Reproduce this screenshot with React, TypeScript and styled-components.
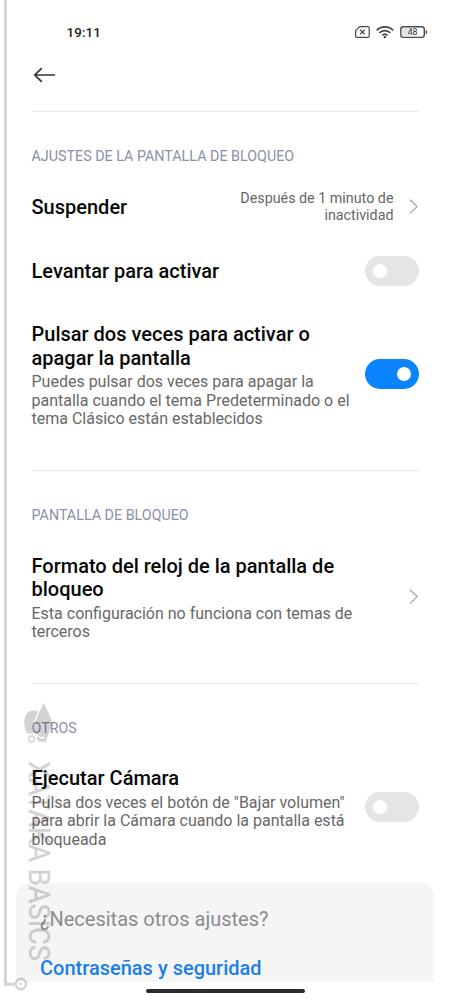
import React from "react";
import styled, { createGlobalStyle } from "styled-components";

const Global = createGlobalStyle`
  *, *::before, *::after { box-sizing: border-box; }
  html, body { margin: 0; padding: 0; background: #fff; }
  body { font-family: Roboto, "Liberation Sans", sans-serif; }
`;

const Screen = styled.main`
  position: relative;
  width: 450px;
  height: 1000px;
  overflow: hidden;
  background: #fff;
  display: flex;
  flex-direction: column;
`;

const StatusBar = styled.header`
  height: 64px;
  flex: none;
  padding: 0 22px 1px 66.5px;
  display: flex;
  align-items: center;
  justify-content: space-between;
`;

const Clock = styled.time`
  padding-top: 1px;
  font-size: 13.3px;
  font-weight: 500;
  letter-spacing: 0.15px;
  color: #222;
`;

const StatusIcons = styled.div`
  display: flex;
  align-items: center;
`;

const NavBar = styled.nav`
  height: 47px;
  flex: none;
  padding: 3px 33px 0;
`;

const BackButton = styled.button`
  display: block;
  padding: 0;
  border: 0;
  background: none;
  line-height: 0;
`;

const Section = styled.section<{ $height: number }>`
  height: ${(p) => p.$height}px;
  flex: none;
  margin: 0 31.5px 0 31.5px;
  border-top: 1px solid #ebebeb;
  padding-top: 34px;
`;

const SectionLabel = styled.h2`
  margin: 0 0 9px;
  font-size: 14.3px;
  line-height: 20px;
  font-weight: 400;
  color: #8b8fa8;
  white-space: nowrap;
`;

const Row = styled.div<{ $height: number }>`
  height: ${(p) => p.$height}px;
  display: flex;
  align-items: center;
  justify-content: space-between;
`;

const RowText = styled.div<{ $top: number }>`
  padding-top: ${(p) => p.$top}px;
  white-space: nowrap;
`;

const Title = styled.h3`
  margin: 0;
  font-size: 20px;
  line-height: 23.5px;
  font-weight: 500;
  color: #080808;
`;

const Description = styled.p`
  margin: 0;
  padding-top: 3px;
  font-size: 16px;
  line-height: 18.5px;
  color: #686868;
`;

const Value = styled.div`
  display: flex;
  align-items: center;
  gap: 15px;
  white-space: nowrap;
  text-align: right;
  font-size: 14.3px;
  line-height: 17px;
  color: #666;
`;

const Switch = styled.button<{ $on?: boolean }>`
  width: 54px;
  height: 30px;
  flex: none;
  border: 0;
  border-radius: 15px;
  padding: 0 8px;
  display: flex;
  align-items: center;
  justify-content: ${(p) => (p.$on ? "flex-end" : "flex-start")};
  background: ${(p) => (p.$on ? "#0d84ff" : "#e5e5e5")};
`;

const Knob = styled.span`
  width: 14px;
  height: 14px;
  border-radius: 50%;
  background: #fff;
`;

const Suggestions = styled.aside`
  flex: none;
  height: 99px;
  margin: 0 16px;
  padding: 24px 24px 0;
  border-radius: 14px 14px 0 0;
  background: #f5f5f5;
  white-space: nowrap;
`;

const Question = styled.p`
  margin: 0 0 25px;
  font-size: 20px;
  line-height: 24px;
  color: #8c8c8c;
`;

const Link = styled.a`
  display: block;
  font-size: 20px;
  line-height: 24px;
  font-weight: 500;
  color: #1a7fe6;
`;

const HomeIndicator = styled.div`
  width: 159px;
  height: 4px;
  margin: 7px auto 0;
  border-radius: 2px;
  background: #2b2a2c;
`;

const Watermark = styled.svg`
  position: absolute;
  inset: 0;
  pointer-events: none;
`;

const Chevron = () => (
  <svg width="10" height="18" viewBox="0 0 10 18" fill="none" stroke="#a6a6a6" strokeWidth="1.3">
    <path d="M1 1.800 8.100 8.600 1 15.400" />
  </svg>
);

const StatusGlyphs = () => (
  <StatusIcons>
    <svg width="74" height="16" viewBox="0 0 74 16" fill="none">
      <g stroke="#4a4a4a" strokeWidth="1.2">
        <path d="M5.600 2.700H13.900a1.300 1.300 0 0 1 1.300 1.300v8a1.300 1.300 0 0 1-1.300 1.300H2.900a1.300 1.300 0 0 1-1.300-1.300V6.700Z" />
        <path d="m6.100 5.800 4.600 4.400M10.700 5.800 6.100 10.200" />
      </g>
      <g stroke="#444" strokeWidth="1.7">
        <path d="M22.700 6.300a11.500 11.500 0 0 1 16.400 0" />
        <path d="M25.400 8.900a7.800 7.800 0 0 1 11 0" />
        <path d="M28.200 11.300a4 4 0 0 1 5.400 0" />
      </g>
      <circle cx="30.900" cy="13.100" r="1.250" fill="#444" />
      <rect x="48" y="4" width="8" height="8" fill="#e4e4e4" />
      <rect x="46.800" y="2.700" width="23.500" height="10.700" rx="2.600" stroke="#4a4a4a" strokeWidth="1.400" />
      <path d="M72.300 6.200v3.800" stroke="#4a4a4a" strokeWidth="1.300" />
      <text x="58.600" y="11.300" textAnchor="middle" fontSize="8.800" fill="#333">48</text>
    </svg>
  </StatusIcons>
);

export default function App() {
  return (
    <>
      <Global />
      <Screen>
        <StatusBar>
          <Clock>19:11</Clock>
          <StatusGlyphs />
        </StatusBar>
        <NavBar>
          <BackButton aria-label="Atrás">
            <svg width="23" height="16" viewBox="0 0 23 16" fill="none" stroke="#333" strokeWidth="1.7" strokeLinecap="round">
              <path d="M1.800 8H21.400M8.300 1.600 1.800 8l6.500 6.400" />
            </svg>
          </BackButton>
        </NavBar>

        <Section $height={359}>
          <SectionLabel>AJUSTES DE LA PANTALLA DE BLOQUEO</SectionLabel>
          <Row $height={64}>
            <RowText $top={2}>
              <Title>Suspender</Title>
            </RowText>
            <Value>
              <span>Después de 1 minuto de<br />inactividad</span>
              <Chevron />
            </Value>
          </Row>
          <Row $height={63}>
            <RowText $top={2}>
              <Title>Levantar para activar</Title>
            </RowText>
            <Switch aria-label="Levantar para activar"><Knob /></Switch>
          </Row>
          <Row $height={143}>
            <RowText $top={5}>
              <Title>Pulsar dos veces para activar o<br />apagar la pantalla</Title>
              <Description>Puedes pulsar dos veces para apagar la<br />pantalla cuando el tema Predeterminado o el<br />tema Clásico están establecidos</Description>
            </RowText>
            <Switch $on aria-label="Pulsar dos veces"><Knob /></Switch>
          </Row>
        </Section>

        <Section $height={213}>
          <SectionLabel>PANTALLA DE BLOQUEO</SectionLabel>
          <Row $height={125}>
            <RowText $top={3}>
              <Title>Formato del reloj de la pantalla de<br />bloqueo</Title>
              <Description>Esta configuración no funciona con temas de<br />terceros</Description>
            </RowText>
            <Chevron />
          </Row>
        </Section>

        <Section $height={200}>
          <SectionLabel>OTROS</SectionLabel>
          <Row $height={119}>
            <RowText $top={3}>
              <Title>Ejecutar Cámara</Title>
              <Description>Pulsa dos veces el botón de "Bajar volumen"<br />para abrir la Cámara cuando la pantalla está<br />bloqueada</Description>
            </RowText>
            <Switch aria-label="Ejecutar Cámara"><Knob /></Switch>
          </Row>
        </Section>

        <Suggestions>
          <Question>¿Necesitas otros ajustes?</Question>
          <Link>Contraseñas y seguridad</Link>
        </Suggestions>
        <HomeIndicator />

        <Watermark width="450" height="1000" viewBox="0 0 450 1000" fill="none" opacity="0.17">
          <path d="M5.500 0V984.300H14.500" stroke="#000" strokeWidth="3" />
          <circle cx="20.800" cy="984" r="5.200" stroke="#000" strokeWidth="2.500" />
          <circle cx="20.800" cy="984" r="1.300" fill="#000" />
          <path d="M38.300 711.200Q33.500 709.600 29.500 711.200C25.500 713.500 24 719 24.300 724Q24.800 730 27.800 734Q30.500 732.500 33.200 734L32.400 729.500Q33 721.500 38.300 711.200Z" fill="#000" />
          <path d="M43.700 702.500 51 718.500Q52.500 722.500 51 727L45 744V741.800H39.200L36 737.800 38 736.200 40.500 738.500H45V737H41L34 733Q32.500 729 35.200 721.500Z" fill="#000" />
          <circle cx="31.600" cy="739" r="2.900" stroke="#000" strokeWidth="1.500" />
          <text transform="translate(28.500 761) rotate(90)" fontSize="29" fill="#000" stroke="#000" strokeWidth="0.400" textLength="200" lengthAdjust="spacingAndGlyphs">XATAKA BASICS</text>
        </Watermark>
      </Screen>
    </>
  );
}
